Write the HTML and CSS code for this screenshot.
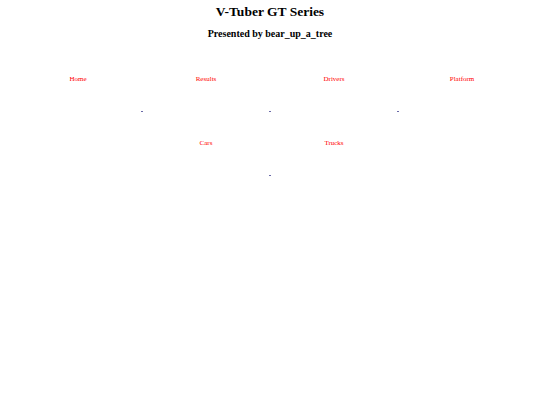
FILE: index.html
```html
<!DOCTYPE html>
<html>
<head>
<meta charset="utf-8">
<link rel="stylesheet" href="styles.css">
</head>
<body>
<header class="masthead">
  <h1 class="title">V-Tuber GT Series</h1>
  <h2 class="subtitle">Presented by bear_up_a_tree</h2>
</header>
<nav class="nav">
  <div class="nav-row">
    <a class="nav-link" href="#">Home</a>
    <a class="nav-link" href="#">Results</a>
    <a class="nav-link" href="#">Drivers</a>
    <a class="nav-link" href="#">Platform</a>
  </div>
  <div class="dot-row">
    <span class="dot"></span><span class="dot"></span><span class="dot"></span>
  </div>
  <div class="nav-row">
    <a class="nav-link" href="#">Cars</a>
    <a class="nav-link" href="#">Trucks</a>
  </div>
  <div class="dot-row">
    <span class="dot"></span>
  </div>
</nav>
</body>
</html>
```
FILE: styles.css
```css
html, body {
  margin: 0;
  padding: 0;
  background: #ffffff;
}
body {
  font-family: "Liberation Serif", "Times New Roman", serif;
  color: #000;
}
.masthead {
  text-align: center;
  padding-top: 4px;
}
.title {
  font-size: 13.5px;
  font-weight: bold;
  margin: 0;
  line-height: 16px;
}
.subtitle {
  font-size: 10px;
  font-weight: bold;
  margin: 8px 0 0 0;
  line-height: 12px;
}
.nav {
  margin-top: 35px;
}
.nav-row {
  display: flex;
  justify-content: center;
}
.nav-link {
  width: 128px;
  text-align: center;
  font-size: 7px;
  line-height: 8px;
  color: #ff0000;
  text-decoration: none;
}
.dot-row {
  display: flex;
  justify-content: center;
  gap: 126px;
  margin-top: 28px;
  margin-bottom: 27px;
  height: 1px;
}
.dot {
  width: 2px;
  height: 1px;
  background: #6a6aa8;
}
```
